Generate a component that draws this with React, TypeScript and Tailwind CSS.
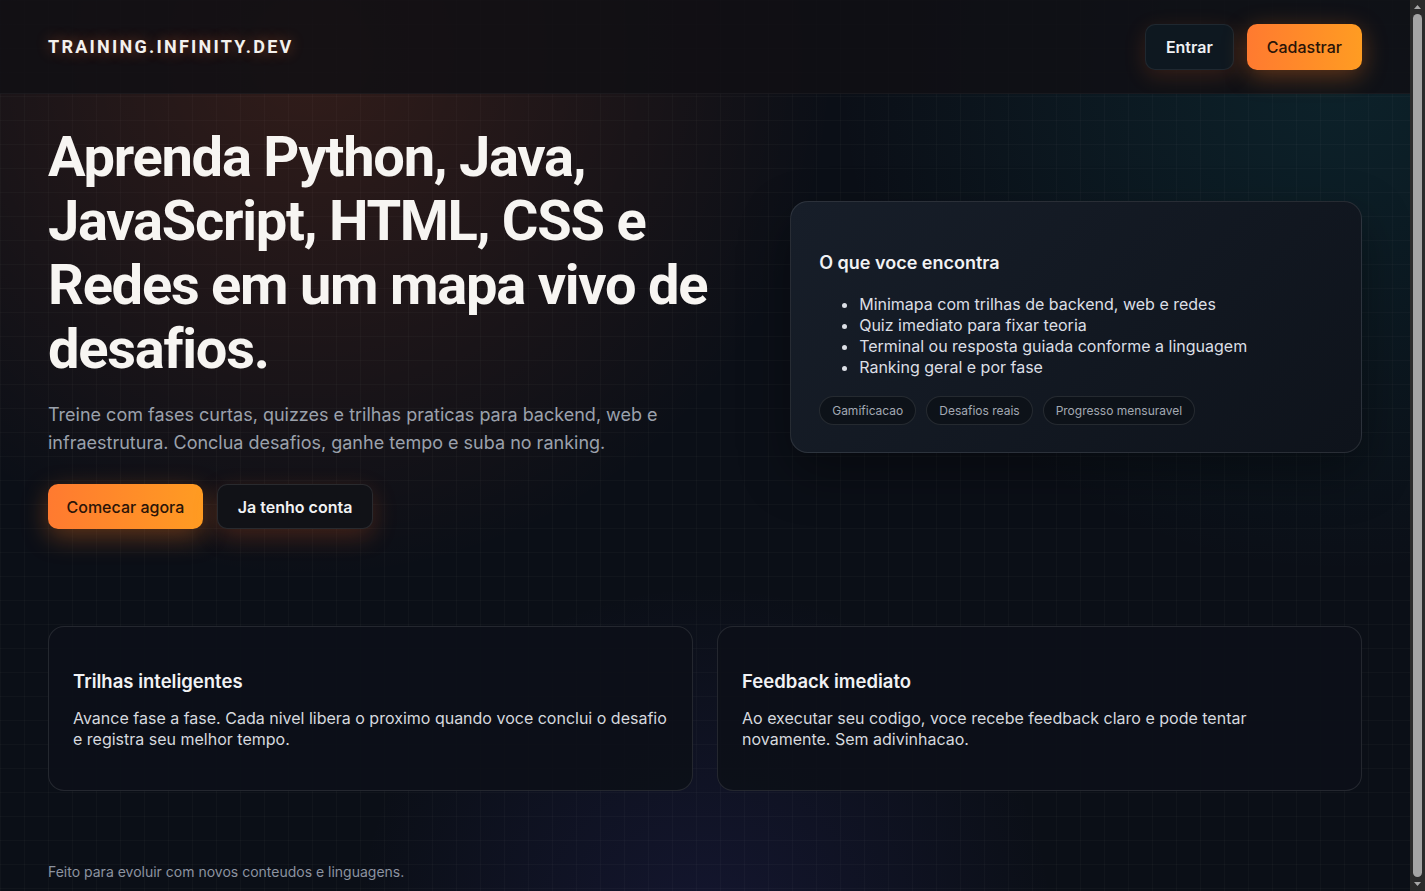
import React from "react";

const body = "font-['Inter','Noto_Sans',sans-serif]";
const display = "font-['Roboto','Liberation_Sans',sans-serif]";

function Scrollbar() {
  return (
    <div className="flex h-screen w-[15px] shrink-0 flex-col items-center bg-[#2a2a2a]">
      <svg width="15" height="14" viewBox="0 0 15 14" className="shrink-0">
        <path d="M4 9 L7.5 5 L11 9 Z" fill="#a8a8a8" />
      </svg>
      <div className="w-[9px] flex-1 rounded-full bg-[#a3a3a3]" />
      <svg width="15" height="14" viewBox="0 0 15 14" className="shrink-0">
        <path d="M4 5 L7.5 9 L11 5 Z" fill="#a8a8a8" />
      </svg>
    </div>
  );
}

export default function App() {
  return (
    <div className="flex h-screen overflow-hidden">
      <div
        className={`min-w-0 flex-1 overflow-hidden bg-[#0b0f17] bg-[radial-gradient(circle_at_22%_6%,rgba(255,100,40,0.16),transparent_38%),radial-gradient(circle_at_95%_8%,rgba(20,150,160,0.14),transparent_32%),radial-gradient(circle_at_50%_105%,rgba(80,70,210,0.13),transparent_30%)] ${body} text-white`}
      >
        <div className="h-full bg-[linear-gradient(to_right,rgba(255,255,255,0.022)_1px,transparent_1px),linear-gradient(to_bottom,rgba(255,255,255,0.022)_1px,transparent_1px)] bg-[size:24px_24px]">
          <header className="flex h-[94px] items-center justify-between border-b border-white/[0.04] bg-[#100f14]/85 px-12">
            <div
              className={`${display} text-[18px] font-bold tracking-[0.125em] text-[#f3f1ee] [text-shadow:0_0_14px_rgba(255,110,50,0.45)]`}
            >
              TRAINING.INFINITY.DEV
            </div>
            <div className="flex items-center gap-[13px]">
              <button className="h-[46px] rounded-[10px] border border-white/[0.07] bg-[#0e1820] px-5 text-[16px] font-semibold text-[#eef0f3] shadow-[0_6px_22px_rgba(255,100,30,0.16)]">
                Entrar
              </button>
              <button className="h-[46px] rounded-[10px] bg-[linear-gradient(90deg,#ff7a30,#ff9c22)] px-5 text-[16px] font-medium text-[#2a1408] shadow-[0_6px_24px_rgba(255,120,30,0.35)]">
                Cadastrar
              </button>
            </div>
          </header>

          <main className="px-12">
            <section className="grid grid-cols-[1.2fr_1fr] items-center gap-14 pt-[31px]">
              <div>
                <h1
                  className={`${display} text-[56px] font-bold leading-[64px] tracking-[-1.25px] text-[#f7f5f2]`}
                >
                  Aprenda Python, Java, JavaScript, HTML, CSS e Redes em um mapa vivo de desafios.
                </h1>
                <p className="mt-5 max-w-[640px] text-[18px] leading-[28px] text-[#9ba1ac]">
                  Treine com fases curtas, quizzes e trilhas praticas para backend, web e infraestrutura. Conclua desafios, ganhe tempo e suba no ranking.
                </p>
                <div className="mt-[27px] flex gap-[14px]">
                  <button className="h-[45px] rounded-[10px] bg-[linear-gradient(90deg,#ff7a30,#ff9c22)] px-[18.5px] text-[16px] font-medium text-[#2a1408] shadow-[0_8px_26px_rgba(255,120,30,0.35)]">
                    Comecar agora
                  </button>
                  <button className="h-[45px] rounded-[10px] border border-white/[0.1] bg-[#111217] px-5 text-[16px] font-semibold text-[#f1f2f4] shadow-[0_8px_24px_rgba(255,100,30,0.22)]">
                    Ja tenho conta
                  </button>
                </div>
              </div>

              <div className="rounded-[18px] border border-white/[0.1] bg-[linear-gradient(135deg,#171e29,#0e131b)] px-7 pb-[27px] pt-[48px] shadow-[0_20px_50px_rgba(0,0,0,0.35)]">
                <h3 className="text-[18px] font-semibold leading-[26px] text-[#f1f2f4]">
                  O que voce encontra
                </h3>
                <ul className="mt-[18px] list-disc pl-10 text-[16px] leading-[21px] text-[#dcdfe5]">
                  <li>Minimapa com trilhas de backend, web e redes</li>
                  <li>Quiz imediato para fixar teoria</li>
                  <li>Terminal ou resposta guiada conforme a linguagem</li>
                  <li>Ranking geral e por fase</li>
                </ul>
                <div className="mt-[18px] flex gap-[10px]">
                  {["Gamificacao", "Desafios reais", "Progresso mensuravel"].map((c) => (
                    <span
                      key={c}
                      className="flex h-[29px] items-center rounded-full border border-white/[0.1] bg-[#0d1219] px-3 text-[12px] text-[#a3a9b3]"
                    >
                      {c}
                    </span>
                  ))}
                </div>
              </div>
            </section>

            <section className="mt-[97px] grid grid-cols-2 gap-6">
              {[
                {
                  t: "Trilhas inteligentes",
                  d: "Avance fase a fase. Cada nivel libera o proximo quando voce conclui o desafio e registra seu melhor tempo.",
                },
                {
                  t: "Feedback imediato",
                  d: "Ao executar seu codigo, voce recebe feedback claro e pode tentar novamente. Sem adivinhacao.",
                },
              ].map((f) => (
                <div
                  key={f.t}
                  className="h-[165px] rounded-[16px] border border-white/[0.1] bg-[#0d1018]/95 px-6 pt-[42px]"
                >
                  <h3 className="text-[18.5px] font-semibold leading-[24px] text-[#f1f2f4]">{f.t}</h3>
                  <p className="mt-[15px] text-[16px] leading-[21px] text-[#d6d9df]">{f.d}</p>
                </div>
              ))}
            </section>
          </main>

          <footer className="px-12 pt-[71px] text-[14px] leading-[20px] text-[#8c93a0]">
            Feito para evoluir com novos conteudos e linguagens.
          </footer>
        </div>
      </div>
      <Scrollbar />
    </div>
  );
}
